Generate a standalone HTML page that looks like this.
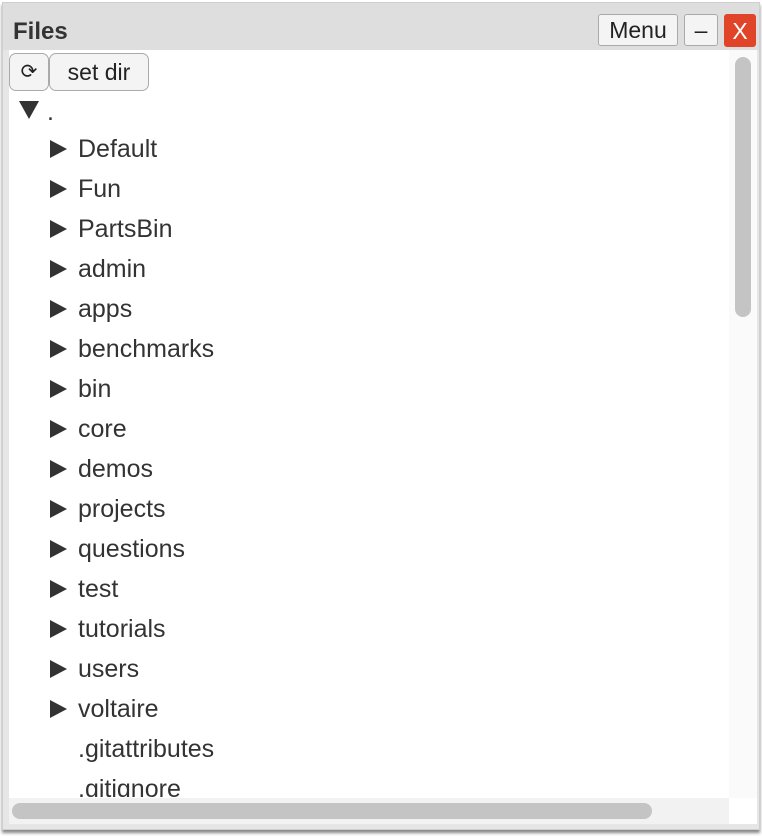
<!DOCTYPE html>
<html><head><style>
body{margin:0;width:762px;height:836px;background:#fff;font-family:"Liberation Sans",sans-serif;overflow:hidden;position:relative}
.win{position:absolute;left:2px;top:2px;width:756px;height:826px;background:#e6e6e6;border:1px solid #cfcfcf;box-shadow:0 3px 3px #888}
.title{position:absolute;left:0;top:0;width:756px;height:47px;background:#dedede}
.title b{position:absolute;left:10px;top:15px;font-size:24px;color:#333}
.btn{position:absolute;border:1px solid #aaa;border-radius:3px;background:#f4f4f4;font-size:23px;color:#222;text-align:center;box-sizing:border-box}
.content{position:absolute;left:6px;top:47px;width:720px;height:748px;background:#fff;overflow:hidden}
.row{position:absolute;font-size:25px;color:#333;white-space:nowrap}
.tri{position:absolute;width:0;height:0;border-top:9px solid transparent;border-bottom:9px solid transparent;border-left:17px solid #333}
</style></head><body>
<div class="win">
<div class="title"><b>Files</b>
<div class="btn" style="left:595px;top:11px;width:80px;height:32px;line-height:31px">Menu</div>
<div class="btn" style="left:681px;top:11px;width:34px;height:32px;line-height:30px">–</div>
<div class="btn" style="left:721px;top:11px;width:32px;height:33px;line-height:33px;background:#e0452a;border-color:#e0452a;color:#fff">X</div>
</div>
<div class="content">
<div class="btn" style="left:0;top:3px;width:40px;height:38px;line-height:36px;border-radius:7px;font-size:20px;font-weight:300">⟳</div>
<div class="btn" style="left:40px;top:3px;width:100px;height:38px;line-height:36px;border-radius:7px">set dir</div>
<div style="position:absolute;left:10px;top:51px;width:0;height:0;border-left:10px solid transparent;border-right:10px solid transparent;border-top:18px solid #333"></div>
<div class="row" style="left:38px;top:48px">.</div>
</div>
<div style="position:absolute;left:726px;top:47px;width:28px;height:748px;background:#fafafa"></div>
<div style="position:absolute;left:732px;top:54px;width:16px;height:260px;border-radius:8px;background:#c4c4c4"></div>
<div style="position:absolute;left:6px;top:795px;width:720px;height:26px;background:#f2f2f2"></div>
<div style="position:absolute;left:9px;top:800px;width:640px;height:16px;border-radius:8px;background:#c4c4c4"></div>
<div style="position:absolute;left:726px;top:795px;width:28px;height:26px;background:#fff"></div>
</div>
<div style="position:absolute;left:8px;top:0;width:720px;height:797px;overflow:hidden">
<div class="tri" style="left:42px;top:140px"></div><div class="row" style="left:70px;top:135px">Default</div>
<div class="tri" style="left:42px;top:180px"></div><div class="row" style="left:70px;top:175px">Fun</div>
<div class="tri" style="left:42px;top:220px"></div><div class="row" style="left:70px;top:215px">PartsBin</div>
<div class="tri" style="left:42px;top:260px"></div><div class="row" style="left:70px;top:255px">admin</div>
<div class="tri" style="left:42px;top:300px"></div><div class="row" style="left:70px;top:295px">apps</div>
<div class="tri" style="left:42px;top:340px"></div><div class="row" style="left:70px;top:335px">benchmarks</div>
<div class="tri" style="left:42px;top:380px"></div><div class="row" style="left:70px;top:375px">bin</div>
<div class="tri" style="left:42px;top:420px"></div><div class="row" style="left:70px;top:415px">core</div>
<div class="tri" style="left:42px;top:460px"></div><div class="row" style="left:70px;top:455px">demos</div>
<div class="tri" style="left:42px;top:500px"></div><div class="row" style="left:70px;top:495px">projects</div>
<div class="tri" style="left:42px;top:540px"></div><div class="row" style="left:70px;top:535px">questions</div>
<div class="tri" style="left:42px;top:580px"></div><div class="row" style="left:70px;top:575px">test</div>
<div class="tri" style="left:42px;top:620px"></div><div class="row" style="left:70px;top:615px">tutorials</div>
<div class="tri" style="left:42px;top:660px"></div><div class="row" style="left:70px;top:655px">users</div>
<div class="tri" style="left:42px;top:700px"></div><div class="row" style="left:70px;top:695px">voltaire</div>
<div class="row" style="left:70px;top:735px">.gitattributes</div>
<div class="row" style="left:70px;top:775px">.gitignore</div>
</div>
</body></html>
